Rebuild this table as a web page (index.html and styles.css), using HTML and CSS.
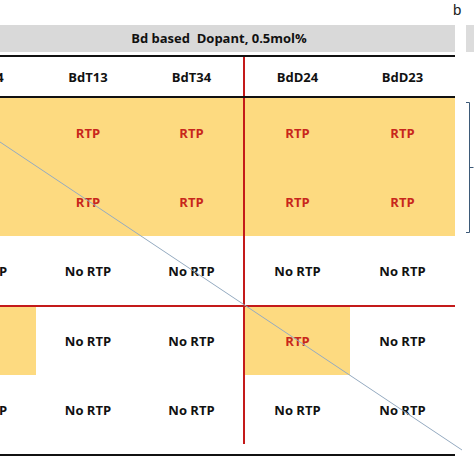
FILE: index.html
```html
<!DOCTYPE html>
<html lang="en">
<head>
    <meta charset="UTF-8">
    <meta name="viewport" content="width=device-width, initial-scale=1.0">
    <title>Bd based dopant RTP table</title>
    <link rel="stylesheet" href="styles.css">
</head>
<body>
    <div class="panel-label">b</div>
    <div class="banner">
        <div class="banner-main">Bd based&nbsp; Dopant, 0.5mol%</div>
        <div class="banner-side"></div>
    </div>
    <div class="main">
        <div class="grid">
            <div class="row head">
                <div class="cell">BdT14</div>
                <div class="cell">BdT13</div>
                <div class="cell">BdT34</div>
                <div class="cell split">BdD24</div>
                <div class="cell">BdD23</div>
            </div>
            <div class="row gold">
                <div class="cell rtp">RTP</div>
                <div class="cell rtp">RTP</div>
                <div class="cell rtp">RTP</div>
                <div class="cell split rtp">RTP</div>
                <div class="cell rtp">RTP</div>
            </div>
            <div class="row gold">
                <div class="cell rtp">RTP</div>
                <div class="cell rtp">RTP</div>
                <div class="cell rtp">RTP</div>
                <div class="cell split rtp">RTP</div>
                <div class="cell rtp">RTP</div>
            </div>
            <div class="row">
                <div class="cell">No RTP</div>
                <div class="cell">No RTP</div>
                <div class="cell">No RTP</div>
                <div class="cell split">No RTP</div>
                <div class="cell">No RTP</div>
            </div>
            <div class="row cross">
                <div class="cell rtp hit">RTP</div>
                <div class="cell">No RTP</div>
                <div class="cell">No RTP</div>
                <div class="cell split rtp hit">RTP</div>
                <div class="cell">No RTP</div>
            </div>
            <div class="row last">
                <div class="cell">No RTP</div>
                <div class="cell">No RTP</div>
                <div class="cell">No RTP</div>
                <div class="cell split">No RTP</div>
                <div class="cell">No RTP</div>
            </div>
        </div>
        <div class="side">
            <svg class="bracket" width="9" height="131" viewBox="0 0 9 131">
                <path d="M1 0.5 H4.5 V130.5 H1 M4.5 65.5 H8.5" fill="none" stroke="#3d5a78" stroke-width="1"/>
            </svg>
        </div>
        <svg class="diagonal" width="474" height="400" viewBox="0 0 474 400">
            <line x1="0" y1="87" x2="462" y2="395" stroke="#94aac0" stroke-width="1"/>
        </svg>
    </div>
</body>
</html>
```

FILE: styles.css
```css
body {
    margin: 0;
    width: 474px;
    height: 474px;
    overflow: hidden;
    background: #fff;
    font-family: "Open Sans", sans-serif;
    font-weight: 700;
    font-size: 13px;
    color: #111;
}

.panel-label {
    height: 25px;
    padding-left: 453px;
    font-family: "Liberation Sans", sans-serif;
    font-weight: 400;
    font-size: 15px;
    line-height: 20px;
    color: #222;
}

.banner {
    display: flex;
    gap: 11px;
    height: 27px;
    margin-bottom: 3px;
}

.banner-main {
    width: 455px;
    padding-right: 17px;
    box-sizing: border-box;
    background: #d9d9d9;
    text-align: center;
    line-height: 27px;
}

.banner-side {
    flex: 1;
    background: #dcdcdc;
}

.main {
    position: relative;
    display: flex;
}

.grid {
    width: 455px;
    border-top: 2px solid #111;
    border-bottom: 2px solid #111;
}

.row {
    display: flex;
    height: 69px;
    margin-left: -68px;
}

.row.head {
    height: 39px;
    border-bottom: 2px solid #111;
}

.row.gold {
    background: #fdda80;
}

.row.cross {
    height: 68px;
    border-top: 2px solid #c41a1a;
}

.row.last {
    height: 79px;
    padding-bottom: 10px;
    box-sizing: border-box;
}

.cell {
    display: flex;
    align-items: center;
    justify-content: center;
    width: 104px;
}

.cell:nth-child(3) {
    width: 103px;
}

.cell:nth-child(5) {
    width: 105px;
}

.cell.split {
    width: 107px;
    box-sizing: border-box;
    border-left: 2px solid #c41a1a;
}

.rtp {
    color: #c8261c;
}

.hit {
    background: #fdda80;
}

.side {
    flex: 1;
    padding: 47px 0 0 10px;
}

.bracket {
    display: block;
}

.diagonal {
    position: absolute;
    top: 0;
    left: 0;
    pointer-events: none;
}
```
